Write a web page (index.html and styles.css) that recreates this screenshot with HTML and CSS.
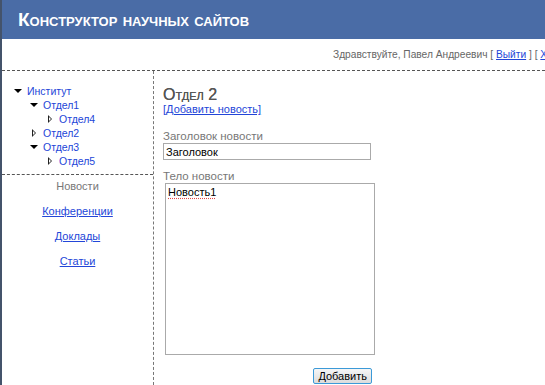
FILE: index.html
```html
<!DOCTYPE html>
<html lang="ru">
<head>
<meta charset="UTF-8">
<title>Конструктор научных сайтов</title>
<link rel="stylesheet" href="styles.css">
</head>
<body>

<div class="header">
  <h1>Конструктор научных сайтов</h1>
</div>

<div class="userbar">
  <span>Здравствуйте, Павел Андреевич [ <a href="#">Выйти</a> ] [ <a href="#">Хранилище</a> ]</span>
</div>

<div class="main">
  <div class="sidebar">
    <ul class="tree">
      <li class="lvl0"><span class="tri down"></span><a href="#">Институт</a></li>
      <li class="lvl1"><span class="tri down"></span><a href="#">Отдел1</a></li>
      <li class="lvl2"><span class="tri right"></span><a href="#">Отдел4</a></li>
      <li class="lvl1"><span class="tri right"></span><a href="#">Отдел2</a></li>
      <li class="lvl1"><span class="tri down"></span><a href="#">Отдел3</a></li>
      <li class="lvl2"><span class="tri right"></span><a href="#">Отдел5</a></li>
    </ul>
    <ul class="menu">
      <li class="current">Новости</li>
      <li><a href="#">Конференции</a></li>
      <li><a href="#">Доклады</a></li>
      <li><a href="#">Статьи</a></li>
    </ul>
  </div>

  <div class="content">
    <h2>Отдел 2</h2>
    <a class="addlink" href="#">[Добавить новость]</a>
    <form class="newsform">
      <label for="title">Заголовок новости</label>
      <input type="text" id="title" value="Заголовок">
      <label for="body">Тело новости</label>
      <textarea id="body" spellcheck="true">Новость1</textarea>
      <div class="buttons">
        <input type="submit" value="Добавить">
      </div>
    </form>
  </div>
</div>

</body>
</html>
```

FILE: styles.css
```css
html, body {
  height: 100%;
}

body {
  margin: 0;
  font-family: "Liberation Sans", Arial, sans-serif;
  font-size: 11px;
  color: #555;
  background-color: #fff;
  border-left: 2px solid #44536b;
  overflow: hidden;
}

a {
  color: #2346d8;
}

.header {
  height: 39px;
  background-color: #4a6ca6;
  display: flex;
  align-items: center;
  padding-left: 16px;
}

.header h1 {
  margin: 0;
  color: #fff;
  font-size: 19px;
  font-weight: bold;
  font-variant: small-caps;
}

.userbar {
  height: 31px;
  display: flex;
  justify-content: flex-end;
  align-items: center;
  overflow: hidden;
  white-space: nowrap;
  border-bottom: 1px dashed #555;
}

.userbar span {
  flex-shrink: 0;
  margin-right: -56px;
  font-size: 10.2px;
  color: #666;
}

.main {
  display: flex;
  height: calc(100% - 71px);
}

.sidebar {
  width: 151px;
  border-right: 1px dashed #777;
}

.tree {
  list-style: none;
  margin: 0;
  padding: 13px 0 6px 0;
  border-bottom: 1px dashed #555;
}

.tree li {
  height: 14px;
  line-height: 14px;
  display: flex;
  align-items: center;
}

.tree a {
  text-decoration: none;
  font-size: 10.5px;
}

.tree .lvl0 { padding-left: 12px; }
.tree .lvl1 { padding-left: 28px; }
.tree .lvl2 { padding-left: 44px; }

.tri {
  width: 13px;
  height: 14px;
  flex-shrink: 0;
  position: relative;
}

.tri.down::before {
  content: '';
  position: absolute;
  left: 0;
  top: 5px;
  border-left: 4px solid transparent;
  border-right: 4px solid transparent;
  border-top: 4px solid #000;
}

.tri.right::before {
  content: '';
  position: absolute;
  left: 2px;
  top: 3px;
  border-top: 4px solid transparent;
  border-bottom: 4px solid transparent;
  border-left: 4px solid #222;
}

.tri.right::after {
  content: '';
  position: absolute;
  left: 3px;
  top: 5px;
  border-top: 2px solid transparent;
  border-bottom: 2px solid transparent;
  border-left: 2px solid #fff;
}

.menu {
  list-style: none;
  margin: 0;
  padding: 0;
  text-align: center;
}

.menu li {
  height: 25px;
  line-height: 23px;
  font-size: 11px;
}

.menu .current {
  color: #777;
}

.content {
  flex: 1;
  padding: 16px 0 0 9px;
}

.content h2 {
  margin: 0;
  font-size: 16px;
  line-height: 16px;
  font-weight: normal;
  font-variant: small-caps;
  color: #555;
  text-shadow: 0 0 0.4px #555;
}

.addlink {
  display: block;
  line-height: 13px;
  margin-bottom: 14px;
}

.newsform label {
  display: block;
  line-height: 13px;
  font-size: 11.5px;
  color: #777;
}

.newsform input[type="text"] {
  display: block;
  box-sizing: border-box;
  width: 208px;
  height: 17px;
  margin: 0 0 10px 0;
  padding: 0 2px;
  border: 1px solid #aaa;
  font-family: inherit;
  font-size: 11px;
  color: #000;
}

.newsform textarea {
  display: block;
  box-sizing: border-box;
  width: 210px;
  height: 172px;
  margin: 0 0 0 2px;
  padding: 2px 2px;
  border: 1px solid #aaa;
  resize: none;
  font-family: inherit;
  font-size: 11px;
  color: #000;
  text-decoration: underline dotted #e04848;
  text-underline-offset: 2px;
}

.buttons {
  width: 209px;
  text-align: right;
  padding-top: 13px;
}

.buttons input[type="submit"] {
  height: 16px;
  padding: 0 4px;
  font-family: inherit;
  font-size: 11px;
  color: #000;
  background: linear-gradient(#f6f6f6, #dcdcdc);
  border: 1px solid #3c9ad8;
  border-radius: 2px;
}
```
